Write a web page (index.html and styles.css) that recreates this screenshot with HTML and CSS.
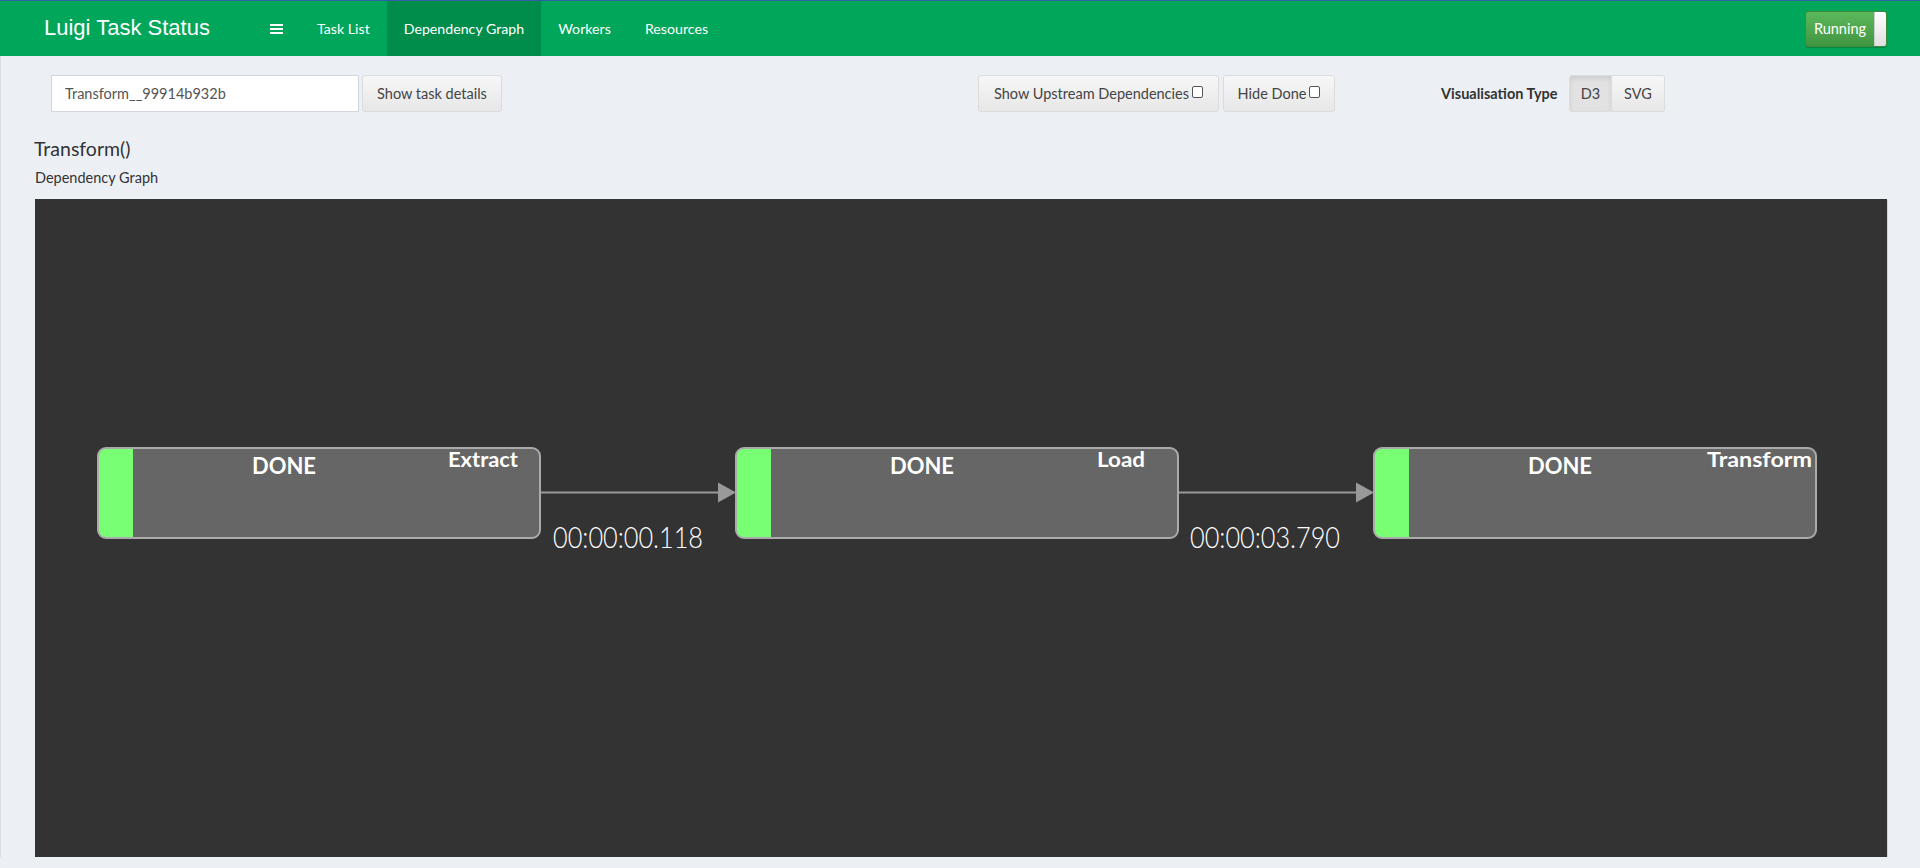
FILE: index.html
```html
<!DOCTYPE html>
<html>
<head>
<meta charset="utf-8">
<title>Luigi Task Status</title>
<link rel="stylesheet" href="styles.css">
</head>
<body>
<header class="header">
  <div class="brand">Luigi Task Status</div>
  <nav class="nav">
    <a class="nav-link toggle" href="#"><span class="burger"><i></i><i></i><i></i></span></a>
    <a class="nav-link" href="#">Task List</a>
    <a class="nav-link active" href="#">Dependency Graph</a>
    <a class="nav-link" href="#">Workers</a>
    <a class="nav-link" href="#">Resources</a>
  </nav>
  <div class="header-right">
    <div class="run-toggle"><span class="run-label">Running</span><span class="run-handle"></span></div>
  </div>
</header>
<div class="wrapper">
  <div class="form-row">
    <div class="task-group">
      <input class="task-input" type="text" value="Transform__99914b932b">
      <button class="btn btn-details">Show task details</button>
    </div>
    <div class="opt-group">
      <button class="btn btn-upstream">Show Upstream Dependencies<input class="cb" type="checkbox"></button>
      <button class="btn btn-hide">Hide Done<input class="cb" type="checkbox"></button>
    </div>
    <div class="vis-group">
      <span class="vis-label">Visualisation Type</span>
      <div class="seg">
        <button class="btn seg-btn active">D3</button>
        <button class="btn seg-btn">SVG</button>
      </div>
    </div>
  </div>
  <h3 class="task-title">Transform()</h3>
  <div class="sub-title">Dependency Graph</div>
  <div class="graph">
    <svg class="graph-svg" width="1852" height="658">
      <g class="edge">
        <line x1="505" y1="293.5" x2="684" y2="293.5"></line>
        <polygon points="701,293.5 683,283.5 683,303.5"></polygon>
        <text class="dur" x="518" y="349" textLength="150" lengthAdjust="spacingAndGlyphs">00:00:00.118</text>
      </g>
      <g class="edge">
        <line x1="1143" y1="293.5" x2="1322" y2="293.5"></line>
        <polygon points="1339,293.5 1321,283.5 1321,303.5"></polygon>
        <text class="dur" x="1155" y="349" textLength="150" lengthAdjust="spacingAndGlyphs">00:00:03.790</text>
      </g>
      <g class="node" transform="translate(63,249)">
        <rect class="node-bg" width="442" height="90" rx="8"></rect>
        <path class="node-status" d="M8,0 H35 V90 H8 A8,8 0 0 1 0,82 V8 A8,8 0 0 1 8,0 Z"></path>
        <rect class="node-border" width="442" height="90" rx="8"></rect>
        <text class="node-state" x="154" y="26.3" textLength="64" lengthAdjust="spacingAndGlyphs">DONE</text>
        <text class="node-name" x="350" y="18.7" textLength="70" lengthAdjust="spacingAndGlyphs">Extract</text>
      </g>
      <g class="node" transform="translate(701,249)">
        <rect class="node-bg" width="442" height="90" rx="8"></rect>
        <path class="node-status" d="M8,0 H35 V90 H8 A8,8 0 0 1 0,82 V8 A8,8 0 0 1 8,0 Z"></path>
        <rect class="node-border" width="442" height="90" rx="8"></rect>
        <text class="node-state" x="154" y="26.3" textLength="64" lengthAdjust="spacingAndGlyphs">DONE</text>
        <text class="node-name" x="361" y="18.7" textLength="48" lengthAdjust="spacingAndGlyphs">Load</text>
      </g>
      <g class="node" transform="translate(1339,249)">
        <rect class="node-bg" width="442" height="90" rx="8"></rect>
        <path class="node-status" d="M8,0 H35 V90 H8 A8,8 0 0 1 0,82 V8 A8,8 0 0 1 8,0 Z"></path>
        <rect class="node-border" width="442" height="90" rx="8"></rect>
        <text class="node-state" x="154" y="26.3" textLength="64" lengthAdjust="spacingAndGlyphs">DONE</text>
        <text class="node-name" x="333" y="18.7" textLength="105" lengthAdjust="spacingAndGlyphs">Transform</text>
      </g>
    </svg>
  </div>
</div>
</body>
</html>
```
FILE: styles.css
```css
* { box-sizing: border-box; }
html, body { margin: 0; padding: 0; }
body {
  background: #ecf0f5;
  font-family: Lato, "Open Sans", sans-serif;
  color: #333;
  overflow: hidden;
}
.header {
  display: flex;
  align-items: stretch;
  height: 56px;
  background: #00a65a;
  border-top: 1px solid #2f5fa7;
}
.brand {
  width: 230px;
  padding-left: 44px;
  display: flex;
  align-items: center;
  font-family: "Liberation Sans", Arial, sans-serif;
  font-size: 22px;
  color: #fff;
  padding-bottom: 1px;
}
.nav { display: flex; align-items: stretch; margin-left: 23px; }
.nav-link {
  display: flex;
  align-items: center;
  padding: 0 17px;
  color: #fff;
  text-decoration: none;
  font-size: 14.2px;
}
.nav-link.active { background: #008d4c; }
.burger { display: flex; flex-direction: column; gap: 2px; width: 13px; }
.burger i { display: block; height: 2px; background: #fff; }
.header-right { margin-left: auto; display: flex; align-items: center; padding-right: 33px; }
.run-toggle {
  display: flex;
  width: 82px;
  height: 36px;
  border: 1px solid #3d8b3d;
  border-radius: 3px;
  overflow: hidden;
  background: linear-gradient(#5cb85c, #419641);
  box-shadow: 0 1px 1px rgba(0,0,0,0.2);
}
.run-label {
  flex: 1;
  display: flex;
  align-items: center;
  justify-content: center;
  color: #fff;
  font-size: 14.5px;
}
.run-handle { width: 12px; background: linear-gradient(#fff, #e0e0e0); border-left: 1px solid #ccc; }
.wrapper {
  padding: 18px 33px 0 34px;
  border-left: 1px solid #d8dce3;
}
.form-row { display: flex; align-items: center; height: 38px; }
.task-group { display: flex; margin-left: 16px; }
.task-input {
  width: 308px;
  height: 37px;
  border: 1px solid #d2d6de;
  background: #fff;
  padding: 0 0 0 13px;
  font-family: inherit;
  font-size: 14.5px;
  color: #555;
  outline: none;
}
.btn {
  font-family: inherit;
  font-size: 14.5px;
  color: #444;
  background: linear-gradient(#f7f7f7, #e7e7e7);
  border: 1px solid #dcdcdc;
  border-radius: 3px;
  height: 37px;
  padding: 0;
  display: flex;
  align-items: center;
  justify-content: center;
}
.btn-details { width: 140px; margin-left: 3px; }
.opt-group { display: flex; margin-left: 476px; gap: 4px; }
.btn-upstream { width: 241px; }
.btn-hide { width: 112px; }
.cb {
  appearance: none;
  -webkit-appearance: none;
  width: 11px;
  height: 12px;
  margin: 0 0 3px 3px;
  border: 1px solid #555;
  border-radius: 2px;
  background: #fff;
}
.vis-group { display: flex; align-items: center; margin-left: 106px; }
.vis-label { font-weight: 700; font-size: 14.5px; color: #333; width: 128px; }
.seg { display: flex; }
.seg-btn { border-radius: 0; }
.seg-btn:first-child { width: 43px; border-radius: 3px 0 0 3px; }
.seg-btn:last-child { width: 53px; border-radius: 0 3px 3px 0; border-left: none; }
.seg-btn.active { background: #e2e2e2; box-shadow: inset 0 3px 5px rgba(0,0,0,0.09); }
.task-title {
  margin: 26px 0 0 -1px;
  font-size: 19.5px;
  line-height: 22px;
  font-weight: 400;
  color: #333;
}
.sub-title {
  margin-top: 9px;
  font-size: 14.5px;
  line-height: 18px;
  color: #333;
}
.graph {
  margin-top: 12px;
  height: 658px;
  background: #333333;
  box-shadow: 1px 1px 0 #cfd2d6;
}
.graph-svg { display: block; }
.edge line { stroke: #999; stroke-width: 2; }
.edge polygon { fill: #999; }
.dur { fill: #fff; font-family: Lato, sans-serif; font-weight: 300; font-size: 30px; }
.node-bg { fill: #666; }
.node-status { fill: #78ff73; }
.node-border { fill: none; stroke: #aaa; stroke-width: 2; }
.node-state { fill: #fff; font-family: Lato, sans-serif; font-weight: 700; font-size: 23.5px; }
.node-name { fill: #fff; font-family: Lato, sans-serif; font-weight: 700; font-size: 20px; }
```
